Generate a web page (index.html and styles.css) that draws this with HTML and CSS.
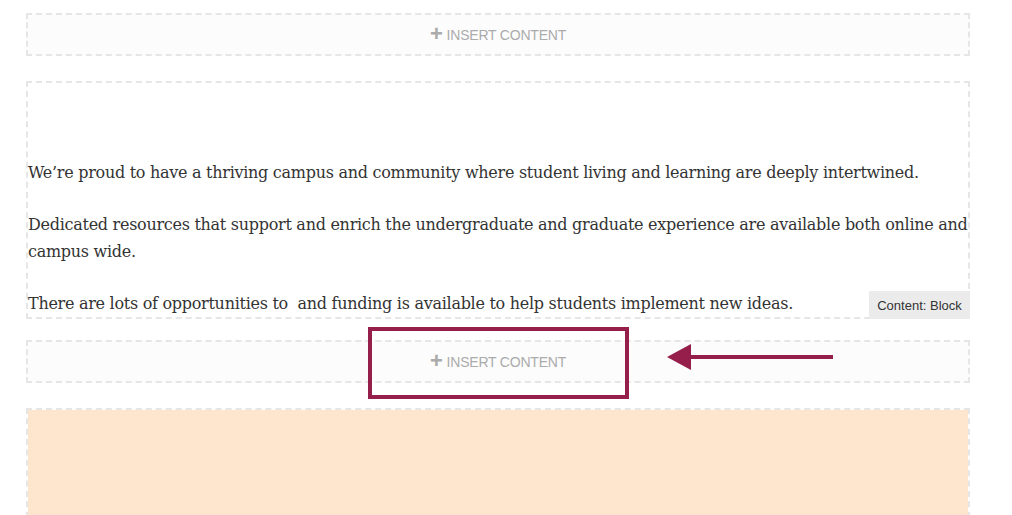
FILE: index.html
```html
<!DOCTYPE html>
<html>
<head>
<meta charset="utf-8">
<link rel="stylesheet" href="styles.css">
</head>
<body>
<div class="page">
  <div class="insert"><span class="plus">+</span>INSERT CONTENT</div>
  <div class="block">
    <p>We’re proud to have a thriving campus and community where student living and learning are deeply intertwined.</p>
    <p>Dedicated resources that support and enrich the undergraduate and graduate experience are available both online and campus wide.</p>
    <p>There are lots of opportunities to &nbsp;and funding is available to help students implement new ideas.</p>
    <div class="label">Content: Block</div>
  </div>
  <div class="insert insert-mid"><span class="plus">+</span>INSERT CONTENT
    <div class="highlight"></div>
    <svg class="arrow" width="170" height="30" viewBox="0 0 170 30">
      <polygon points="0,13 24,0 24,26" fill="#951f4a"/>
      <rect x="22" y="11" width="144" height="4" fill="#951f4a"/>
    </svg>
  </div>
  <div class="peach"></div>
</div>
</body>
</html>
```
FILE: styles.css
```css
html, body {
  margin: 0;
  padding: 0;
  background: #ffffff;
}
.page {
  width: 944px;
  margin-left: 26px;
  padding-top: 13px;
  display: flex;
  flex-direction: column;
}
.insert {
  position: relative;
  height: 43px;
  box-sizing: border-box;
  border: 2px dashed #e6e6e6;
  background: #fcfcfc;
  display: flex;
  align-items: center;
  justify-content: center;
  font-family: "Liberation Sans", Arial, sans-serif;
  font-size: 14px;
  letter-spacing: -0.2px;
  color: #ababab;
}
.plus {
  font-size: 22px;
  font-weight: bold;
  line-height: 1;
  margin-right: 4px;
  position: relative;
  top: -1px;
}
.block {
  position: relative;
  margin-top: 25px;
  border: 2px dashed #e6e6e6;
  padding-top: 76px;
}
.block p {
  margin: 0 0 25px 0;
  font-family: "DejaVu Serif", Georgia, serif;
  font-size: 16px;
  line-height: 27px;
  color: #333333;
  letter-spacing: -0.28px;
}
.block p:last-of-type {
  margin-bottom: 0;
}
.label {
  position: absolute;
  right: -2px;
  bottom: -2px;
  width: 101px;
  height: 28px;
  background: #ebebeb;
  font-family: "Liberation Sans", Arial, sans-serif;
  font-size: 13px;
  color: #333;
  display: flex;
  align-items: center;
  justify-content: center;
}
.insert-mid {
  margin-top: 21px;
}
.highlight {
  position: absolute;
  left: 340px;
  top: -15px;
  width: 261px;
  height: 72px;
  box-sizing: border-box;
  border: 4px solid #951f4a;
}
.arrow {
  position: absolute;
  left: 639px;
  top: 2px;
}
.peach {
  margin-top: 25px;
  height: 120px;
  box-sizing: border-box;
  border: 2px dashed #e6e6e6;
  border-bottom: none;
  background: #fde6cd;
  background-clip: padding-box;
}
```
